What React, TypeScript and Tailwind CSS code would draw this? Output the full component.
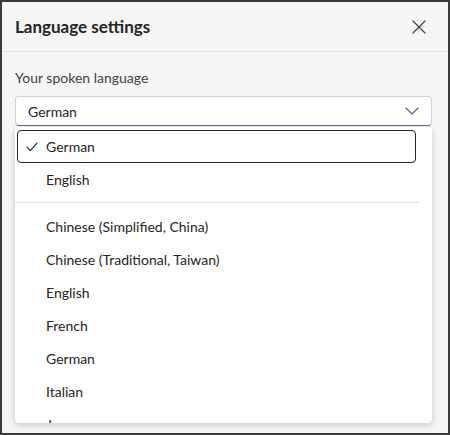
import React from "react";

const font = { fontFamily: '"Segoe UI", Lato, "Noto Sans", sans-serif' };

function XIcon() {
  return (
    <svg width="14" height="14" viewBox="0 0 14 14" fill="none">
      <path d="M1 1L13 13M13 1L1 13" stroke="#424242" strokeWidth="1.2" strokeLinecap="round" />
    </svg>
  );
}

function Chevron() {
  return (
    <svg width="14" height="8" viewBox="0 0 14 8" fill="none">
      <path d="M1 1L7 7L13 1" stroke="#616161" strokeWidth="1.1" strokeLinecap="round" strokeLinejoin="round" />
    </svg>
  );
}

function Check() {
  return (
    <svg width="12" height="10" viewBox="0 0 12 10" fill="none">
      <path d="M1 5.2L4.2 8.6L11 1.2" stroke="#242424" strokeWidth="1.2" strokeLinecap="round" strokeLinejoin="round" />
    </svg>
  );
}

const items = [
  "Chinese (Simplified, China)",
  "Chinese (Traditional, Taiwan)",
  "English",
  "French",
  "German",
  "Italian",
  "Japanese",
];

export default function App() {
  return (
    <div
      className="w-[450px] h-[435px] bg-[#f5f5f5] border-2 border-[#3a3a3a] flex flex-col overflow-hidden text-[#242424]"
      style={font}
    >
      <div className="h-[50px] flex items-center justify-between pl-[13px] pr-[22px] border-b border-[#e0e0e0] shrink-0">
        <span className="text-[17px] font-bold">Language settings</span>
        <XIcon />
      </div>
      <div className="flex flex-col pl-[13px] pr-[16px] pt-[16px] min-h-0 flex-1">
        <div className="text-[14px] leading-[20px] text-[#424242]">Your spoken language</div>
        <div className="mt-[8px] h-[30px] bg-white border border-[#d1d1d1] border-b-[#6264a7] rounded-[4px] flex items-center justify-between pl-[12px] pr-[12px] shrink-0">
          <span className="text-[14px]">German</span>
          <Chevron />
        </div>
        <div className="mt-[1px] bg-white rounded-[4px] shadow-[0_2px_6px_rgba(0,0,0,0.18)] h-[296px] overflow-hidden flex flex-col pt-[3px] pl-[2px] pr-[16px] shrink-0">
          <div className="h-[33px] border border-[#242424] rounded-[4px] flex items-center pl-[8px] gap-[8px] text-[14px] shrink-0">
            <Check />
            <span>German</span>
          </div>
          <div className="h-[33px] flex items-center pl-[29px] text-[14px] shrink-0">English</div>
          <div className="h-px bg-[#e0e0e0] mt-[6px] mb-[7px] -ml-[2px] mr-[-3px] shrink-0" />
          {items.map((t, i) => (
            <div key={i} className="h-[33px] flex items-center pl-[29px] text-[14px] shrink-0">
              {t}
            </div>
          ))}
        </div>
      </div>
    </div>
  );
}
